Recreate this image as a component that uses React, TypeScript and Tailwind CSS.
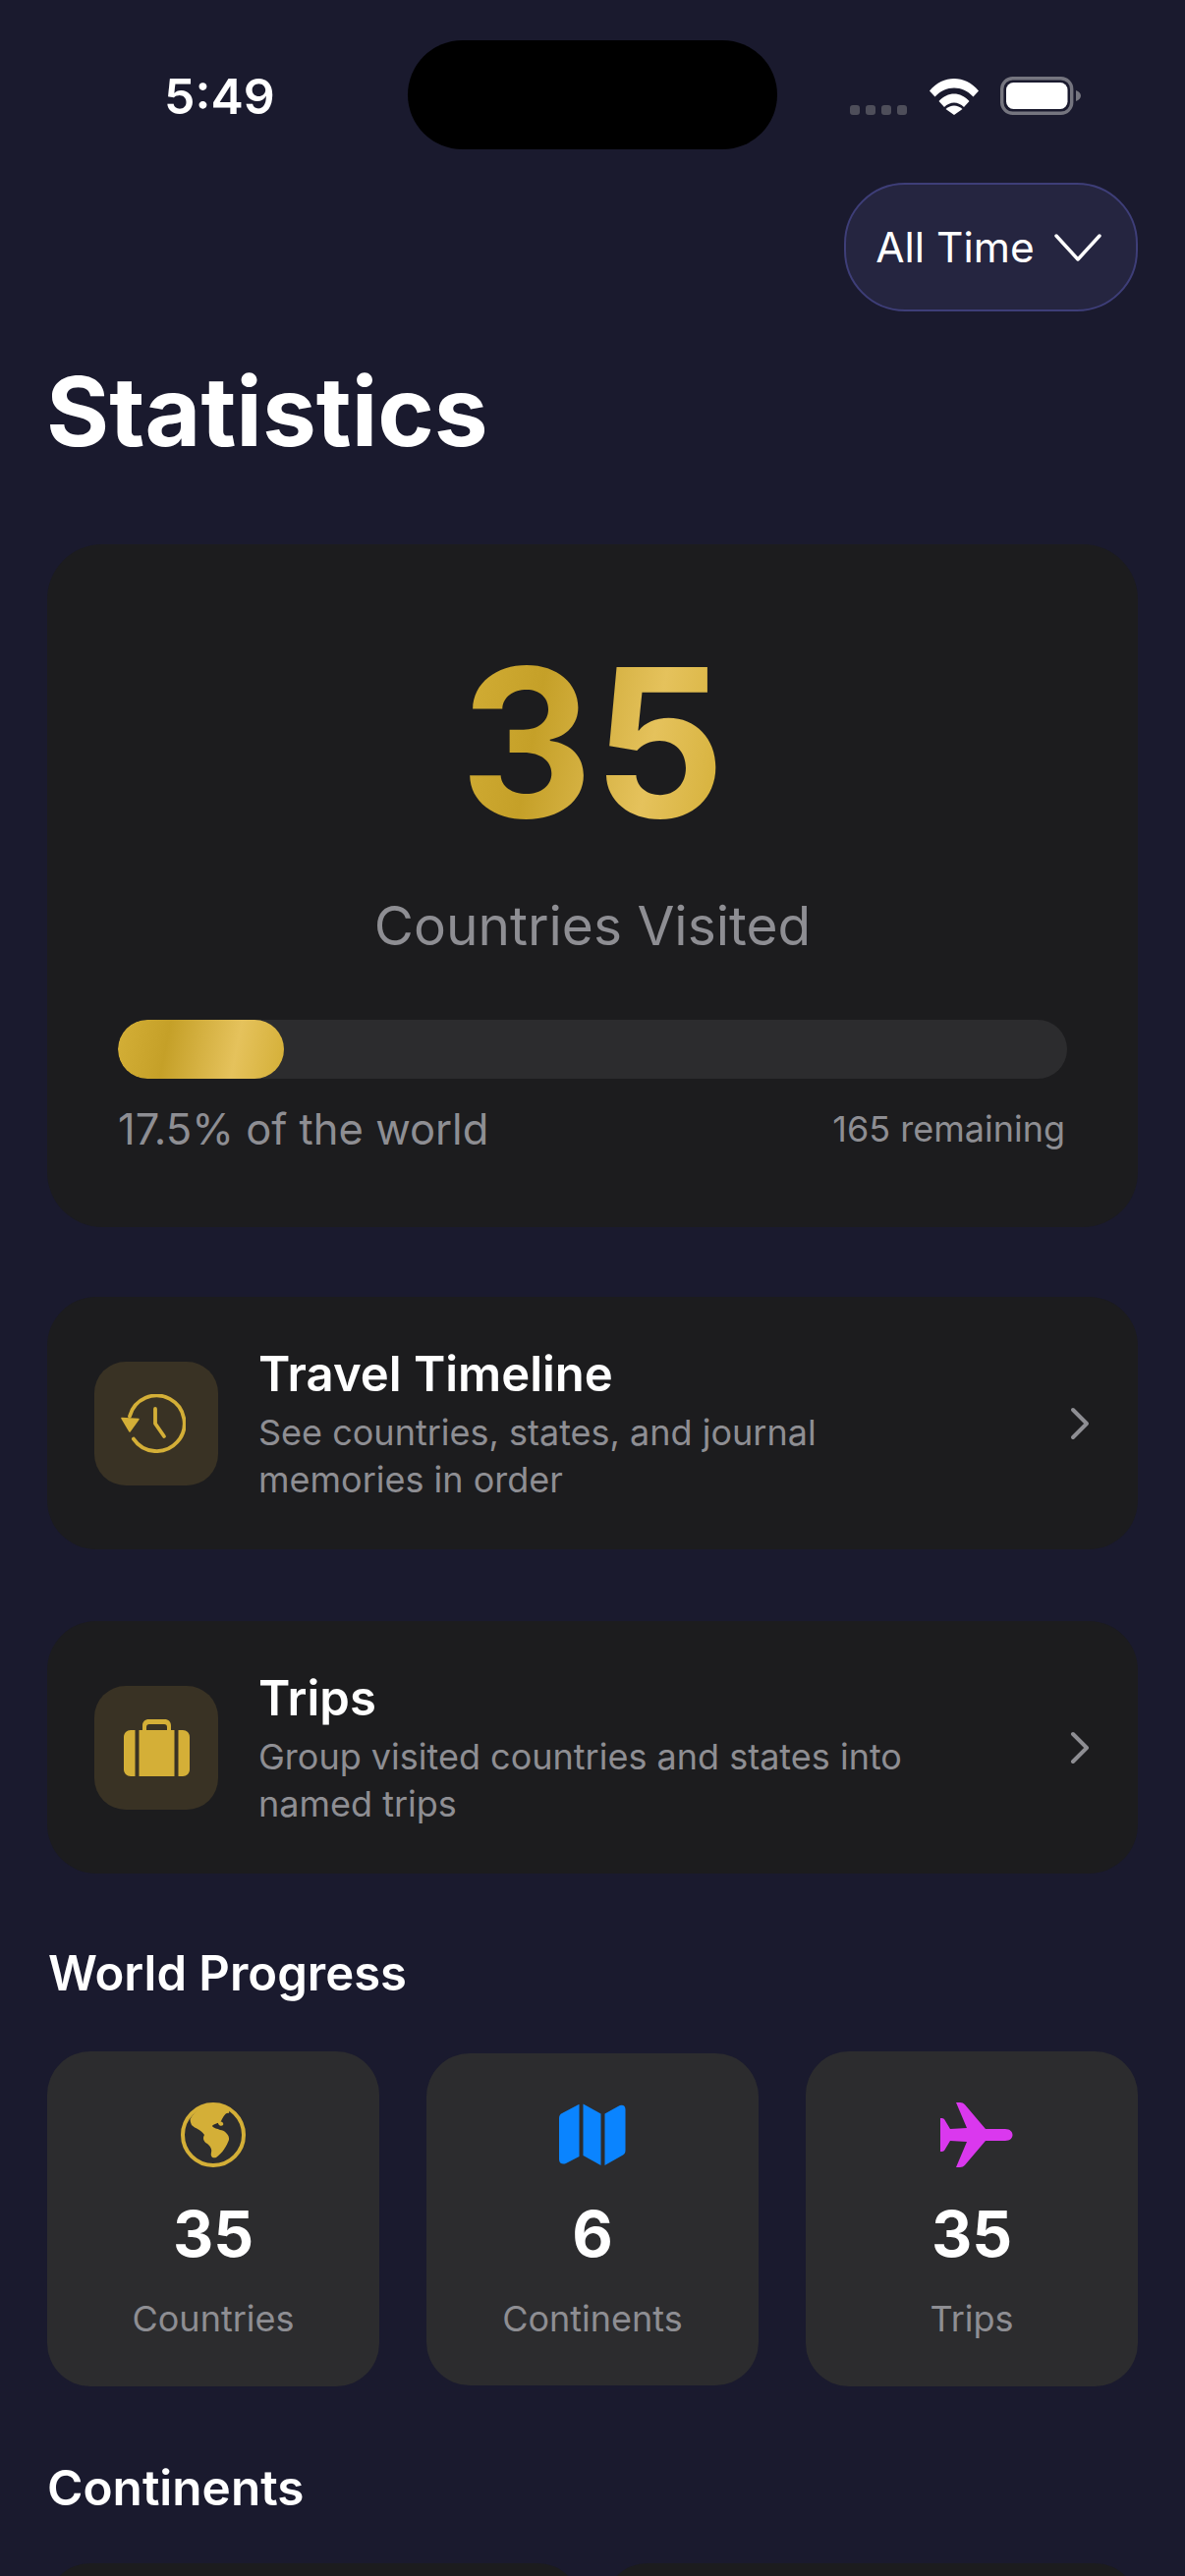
import React from "react";

const font = { fontFamily: "Inter, 'Liberation Sans', sans-serif" };

function Wifi() {
  return (
    <svg width="52" height="38" viewBox="0 0 52 38">
      <path d="M1 13.5 C8 5 17 1 26 1 C35 1 44 5 51 13.5 L45.5 19.5 C40 13.5 33 10.5 26 10.5 C19 10.5 12 13.5 6.5 19.5 Z" fill="#fff" />
      <path d="M10.5 24 C15 19 20.5 16.5 26 16.5 C31.5 16.5 37 19 41.5 24 L36 30 C33 27 29.5 25.5 26 25.5 C22.5 25.5 19 27 16 30 Z" fill="#fff" />
      <path d="M17.5 32 C20 29.8 23 28.5 26 28.5 C29 28.5 32 29.8 34.5 32 L26 38 Z" fill="#fff" />
    </svg>
  );
}

function Battery() {
  return (
    <svg width="82" height="39" viewBox="0 0 82 39">
      <rect x="1.7" y="1.7" width="71" height="35.6" rx="11" fill="none" stroke="#75757f" strokeWidth="3.4" />
      <rect x="6" y="6" width="62.5" height="27" rx="7.5" fill="#fff" />
      <path d="M77 14 C80 15 82 17 82 19.5 C82 22 80 24 77 25 Z" fill="#75757f" />
    </svg>
  );
}

function ClockBack() {
  return (
    <svg width="66" height="60" viewBox="0 0 66 60" fill="none" className="mr-[6px]">
      <path d="M9 22.6 A28.3 28.3 0 1 1 12.9 45.6" stroke="#D4AF37" strokeWidth="3.8" strokeLinecap="round" />
      <path d="M1 24.5 L18 25.5 L9 38 Z" fill="#D4AF37" stroke="#D4AF37" strokeWidth="1.5" strokeLinejoin="round" />
      <path d="M35 15 V30 L44 43" stroke="#D4AF37" strokeWidth="3.8" strokeLinecap="round" strokeLinejoin="round" />
    </svg>
  );
}

function Suitcase() {
  return (
    <svg width="67" height="58" viewBox="0 0 67 58">
      <path d="M19 11 V6.5 C19 2.5 21.5 0 25.5 0 H41.5 C45.5 0 48 2.5 48 6.5 V11 H44 V8 C44 6 43 5 41 5 H26 C24 5 23 6 23 8 V11 Z" fill="#D4AF37" />
      <path d="M15.5 11 H51.5 V58 H15.5 Z" fill="#D4AF37" />
      <path d="M11.5 11 V58 H7 C3 58 0 55 0 51 V18 C0 14 3 11 7 11 Z" fill="#D4AF37" />
      <path d="M55.5 11 H60 C64 11 67 14 67 18 V51 C67 55 64 58 60 58 H55.5 Z" fill="#D4AF37" />
    </svg>
  );
}

function Globe() {
  return (
    <svg width="66" height="66" viewBox="0 0 66 66">
      <circle cx="33" cy="33" r="31" fill="none" stroke="#D4AF37" strokeWidth="4" />
      <path d="M9.5 17 C15 7 24 2 33 2 C43 2 51 6 49 11 C46 10 44 13 41 19 C38 22 34 21 32 24 C34 27 37 26 40 28 C44 28 50 33 49 38 C47 44 42 52 36 56 C32 57 30 55 31 51 C32 47 30 45 27 42 C23 40 22 36 24 33 C20 27 15 27 11 23 C10 21 9.5 19 9.5 17 Z" fill="#D4AF37" />
      <path d="M38 19 C42 19 44 21 43 23 C41 25 37 23 38 19 Z" fill="#D4AF37" />
    </svg>
  );
}

function MapIcon() {
  return (
    <svg width="68" height="64" viewBox="0 0 68 64" fill="#0A84FF">
      <path d="M20.5 1 V54 L7 61 C3.5 62.5 0 61 0 57 V15 C0 12.5 1 11 3 10 L19.5 1.2 C20 1 20.2 1 20.5 1 Z" />
      <path d="M24.5 0.5 L42.5 10.5 V63 L24.5 53 Z" />
      <path d="M46.5 10.5 L60 3 C64 0.5 67.5 2 67.5 6 V48 C67.5 50 66.5 51.5 65 52.5 L46.5 63 Z" />
    </svg>
  );
}

function Plane() {
  return (
    <svg width="74" height="66" viewBox="0 0 74 66" fill="#DA38EE" className="ml-[9px]">
      <path d="M16 0 H20 C22 0 23.5 .8 25 2.2 L46 27 H66 C71 27 73.5 30 73.5 33 C73.5 36 71 39 66 39 H46 L25 63.8 C23.5 65.2 22 66 20 66 H16 L27 40 L10 39 L4 49 C3 49.8 2 50 1.5 50 H0 V16 H1.5 C2 16 3 16.2 4 17 L10 27 L27 26 Z" />
    </svg>
  );
}

function Chevron() {
  return (
    <svg width="20" height="34" viewBox="0 0 20 34" fill="none">
      <path d="M3 3 L17 17 L3 31" stroke="#8e8e93" strokeWidth="4" strokeLinecap="round" strokeLinejoin="round" />
    </svg>
  );
}

function ActionCard({ icon, title, lines }: { icon: React.ReactNode; title: string; lines: string[] }) {
  return (
    <div className="flex h-[257px] items-center rounded-[50px] bg-[#1c1c1e] pl-[48px] pr-[49px]">
      <div className="flex h-[126px] w-[126px] shrink-0 items-center justify-center rounded-[32px] bg-[#393224]">{icon}</div>
      <div className="ml-[41px] flex-1 pt-[2px]">
        <div className="mb-[5px] text-[49px] font-semibold leading-[60px] text-white">{title}</div>
        {lines.map((l) => (
          <div key={l} className="text-[36px] leading-[48px] text-[#8e8e93]">{l}</div>
        ))}
      </div>
      <Chevron />
    </div>
  );
}

function StatCard({ icon, value, label, short }: { icon: React.ReactNode; value: string; label: string; short?: boolean }) {
  return (
    <div className={short ? "flex h-[338px] flex-col items-center rounded-[44px] bg-[#2c2c2e] pt-[50px]" : "flex h-[341px] flex-col items-center rounded-[44px] bg-[#2c2c2e] pt-[52px]"}>
      <div className="flex h-[66px] items-center justify-center">{icon}</div>
      <div className="mt-[28px] text-[64px] font-bold leading-[80px] text-white">{value}</div>
      <div className="mt-[24px] text-[36px] leading-[44px] text-[#8e8e93]">{label}</div>
    </div>
  );
}

export default function App() {
  return (
    <div style={font} className="h-[2622px] w-[1206px] overflow-hidden bg-[#1a1a2e]">
      <div className="relative flex h-[186px] items-start">
        <div className="ml-[167px] mt-[70px] text-[50px] font-semibold leading-[56px] text-white">5:49</div>
        <div className="absolute left-[415px] top-[41px] h-[111px] w-[376px] rounded-[56px] bg-black" />
        <div className="absolute left-[865px] top-[78px] flex items-end">
          <div className="flex gap-[6px]">
            {[0, 1, 2, 3].map((i) => (
              <div key={i} className="h-[10px] w-[10px] rounded-[3px] bg-[#4e4e5a]" />
            ))}
          </div>
          <div className="ml-[22px]"><Wifi /></div>
          <div className="ml-[21px]"><Battery /></div>
        </div>
      </div>
      <div className="flex justify-end pr-[48px]">
        <div className="flex h-[131px] w-[299px] items-center justify-center gap-[19px] rounded-[62px] border-2 border-[#3e3e78] bg-[#252540] pr-[4px]">
          <span className="text-[42.5px] text-white">All Time</span>
          <svg width="50" height="30" viewBox="0 0 50 30" fill="none">
            <path d="M3 3 L25 27 L47 3" stroke="#fff" strokeWidth="3.5" strokeLinecap="round" strokeLinejoin="round" />
          </svg>
        </div>
      </div>
      <h1 className="ml-[47px] mt-[42px] text-[98px] font-bold leading-[120px] text-white">Statistics</h1>
      <div className="mx-[48px] mt-[75px] flex h-[695px] flex-col rounded-[56px] bg-[#1c1c1e] px-[72px] pt-[102px]">
        <div className="flex justify-center">
          <div className="bg-[linear-gradient(101deg,#D4AF37_0%,#C5A028_30%,#E5C25C_70%,#D4AF37_100%)] bg-clip-text text-center text-[210px] font-bold leading-[200px] text-transparent">35</div>
        </div>
        <div className="mt-[51px] text-center text-[55px] leading-[70px] text-[#8e8e93]">Countries Visited</div>
        <div className="mt-[61px] h-[60px] overflow-hidden rounded-[30px] bg-[#2c2c2e]">
          <div className="h-full w-[169px] rounded-[30px] bg-[linear-gradient(101deg,#D4AF37_0%,#C5A028_30%,#E5C25C_70%,#D4AF37_100%)]" />
        </div>
        <div className="mt-[25px] flex items-center justify-between pr-[2px]">
          <span className="text-[43.5px] leading-[52px] text-[#8e8e93]">17.5% of the world</span>
          <span className="text-[36px] leading-[52px] text-[#8e8e93]">165 remaining</span>
        </div>
      </div>
      <div className="mx-[48px] mt-[71px] flex flex-col gap-[73px]">
        <ActionCard icon={<ClockBack />} title="Travel Timeline" lines={["See countries, states, and journal", "memories in order"]} />
        <ActionCard icon={<Suitcase />} title="Trips" lines={["Group visited countries and states into", "named trips"]} />
      </div>
      <h2 className="ml-[49px] mt-[72px] text-[49px] font-semibold leading-[60px] text-white">World Progress</h2>
      <div className="mx-[48px] mt-[49px] grid grid-cols-3 items-center gap-[48px]">
        <StatCard icon={<Globe />} value="35" label="Countries" />
        <StatCard short icon={<MapIcon />} value="6" label="Continents" />
        <StatCard icon={<Plane />} value="35" label="Trips" />
      </div>
      <h2 className="ml-[48px] mt-[73px] text-[49.5px] font-semibold leading-[60px] text-white">Continents</h2>
      <div className="mx-[48px] mt-[47px] grid grid-cols-2 gap-[24px]">
        <div className="h-[200px] rounded-[44px] bg-[#1c1c1e]" />
        <div className="h-[200px] rounded-[44px] bg-[#1c1c1e]" />
      </div>
    </div>
  );
}
